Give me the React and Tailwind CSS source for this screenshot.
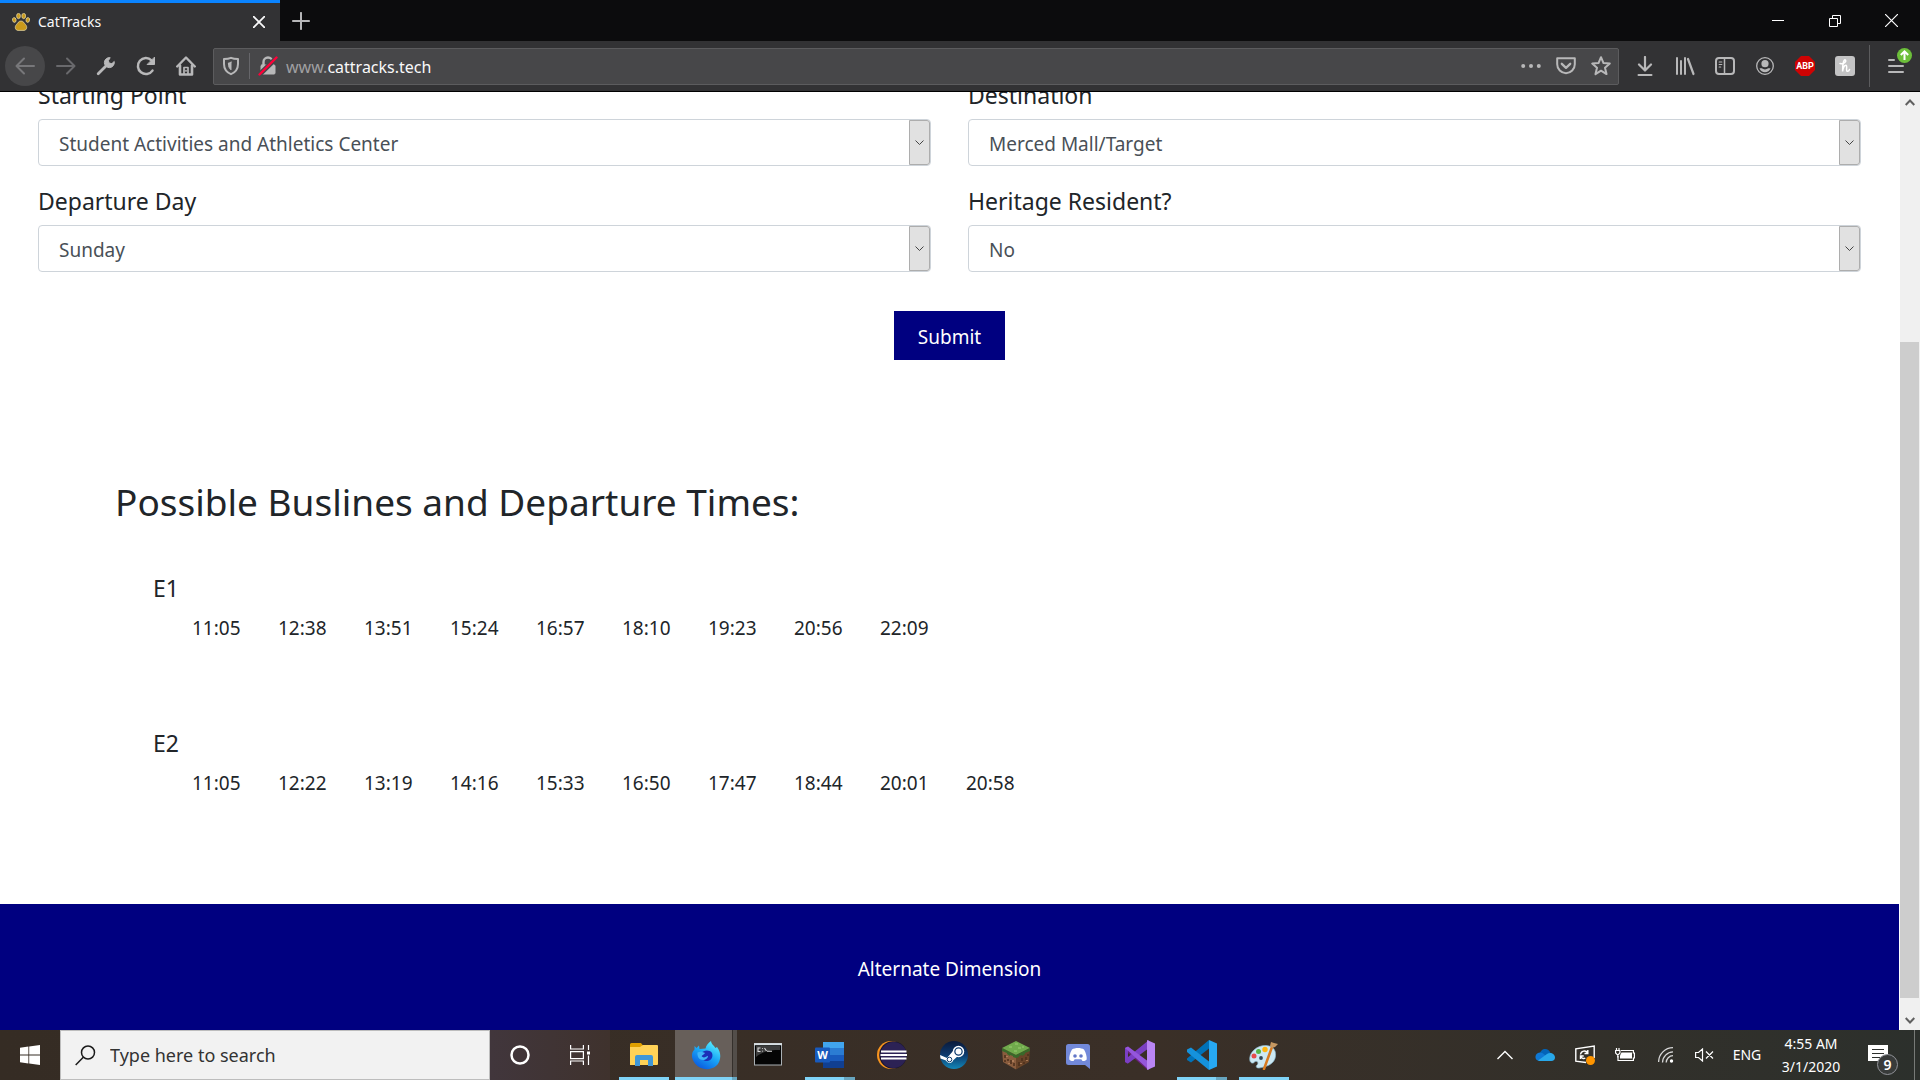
import React from "react";

function Svg({ size = 20, label, children, className = "" }) {
  return (
    <svg
      width={size}
      height={size}
      viewBox="0 0 20 20"
      fill="none"
      stroke="currentColor"
      strokeWidth="2"
      strokeLinecap="round"
      strokeLinejoin="round"
      className={`shrink-0 ${className}`}
      aria-label={label}
      aria-hidden={label ? undefined : true}
    >
      {children}
    </svg>
  );
}

function TabBar() {
  return (
    <div className="flex h-[41px] bg-[#0c0c0d] text-[#f9f9fa]">
      <div className="flex w-[280px] items-center border-t-3 border-[#0a84ff] bg-[#323234] pr-[11px] pl-3">
        <svg width="18" height="18" viewBox="0 0 18 18" fill="#c99a1b" stroke="#e9dcae" strokeWidth="0.7" className="shrink-0" aria-hidden="true">
          <ellipse cx="6.5" cy="3" rx="1.9" ry="2.7" />
          <ellipse cx="11.7" cy="3" rx="1.9" ry="2.7" />
          <ellipse cx="2.3" cy="7" rx="1.8" ry="2.4" transform="rotate(-12 2.3 7)" />
          <ellipse cx="15.8" cy="7" rx="1.8" ry="2.4" transform="rotate(12 15.8 7)" />
          <path d="M9 8c2.5 0 3.200 2.200 4.600 3.700 2 2 1.200 5.600-1.600 5.700H6c-2.800-.1-3.600-3.700-1.600-5.700C5.800 10.200 6.500 8 9 8z" />
        </svg>
        <span className="ml-2 flex-1 text-sm">CatTracks</span>
        <button type="button" aria-label="Close tab" className="flex h-5 w-5 items-center justify-center">
          <Svg size={12}>
            <path d="M1 1l18 18M19 1L1 19" strokeWidth="3" />
          </Svg>
        </button>
      </div>
      <button type="button" aria-label="New tab" className="flex w-[42px] items-center justify-center text-[#b8b8b9]">
        <Svg size={18}>
          <path d="M10 1v18M1 10h18" strokeWidth="2.200" />
        </Svg>
      </button>
      <div className="ml-auto flex">
        <button type="button" aria-label="Minimize" className="flex w-[57px] items-center justify-center">
          <svg width="12" height="12" viewBox="0 0 12 12" stroke="white" aria-hidden="true"><path d="M0 5.500h12" /></svg>
        </button>
        <button type="button" aria-label="Restore" className="flex w-[57px] items-center justify-center">
          <svg width="12" height="12" viewBox="0 0 12 12" fill="none" stroke="white" aria-hidden="true"><path d="M.5 3.500h8v8h-8zM3.500 3.500v-3h8v8h-3" /></svg>
        </button>
        <button type="button" aria-label="Close" className="flex w-[57px] items-center justify-center">
          <svg width="13" height="13" viewBox="0 0 13 13" stroke="white" strokeWidth="1.200" aria-hidden="true"><path d="M0 0l13 13M13 0L0 13" /></svg>
        </button>
      </div>
    </div>
  );
}

function ToolButton({ label, children, className = "" }) {
  return (
    <button type="button" aria-label={label} className={`flex h-10 w-10 shrink-0 items-center justify-center ${className}`}>
      {children}
    </button>
  );
}

function NavBar() {
  return (
    <div className="flex h-[51px] items-center border-b border-black bg-[#323234] pl-[5px] text-[#b8b8b9]">
      <ToolButton label="Back" className="rounded-full bg-[#474749] text-[#77777a]">
        <Svg><path d="M19 10H2M9 2.500L1.500 10 9 17.500" /></Svg>
      </ToolButton>
      <div className="ml-px flex">
        <ToolButton label="Forward" className="text-[#69696c]">
          <Svg><path d="M1 10h17M11 2.500l7.500 7.500-7.500 7.500" /></Svg>
        </ToolButton>
        <ToolButton label="Developer tools">
          <Svg>
            <path d="M2.200 17.800L10 10" strokeWidth="2.800" />
            <path d="M18.300 5.800A5 5 0 1 1 14.200 1.700L12.400 4.600l.6 2.400 2.500.6z" fill="currentColor" strokeWidth="1" />
          </Svg>
        </ToolButton>
        <ToolButton label="Reload">
          <Svg>
            <path d="M16.500 14.600A8 8 0 1 1 15.500 4.300" strokeWidth="2.500" />
            <path d="M18.500 1.500v7h-7z" fill="currentColor" strokeWidth="1" />
          </Svg>
        </ToolButton>
        <ToolButton label="Home">
          <Svg>
            <path d="M1.200 10.500L10 1.500l8.800 9" strokeWidth="2.400" />
            <path d="M4 9.500V18.500h12V9.500" strokeWidth="2.600" />
            <path d="M8 18v-6.500h4V18M10 14.500v.5" strokeWidth="1.700" />
          </Svg>
        </ToolButton>
      </div>

      <div className="ml-[7px] flex h-[37px] min-w-0 flex-1 items-center rounded-xs border border-[#5c5c5e] bg-[#474749] pr-[7px] pl-[7px]">
        <Svg>
          <path d="M10 1.800c2.300 1 4.500 1.200 7 1.200v5c0 5-2.400 8.200-7 10.200-4.600-2-7-5.200-7-10.200V3c2.500 0 4.700-.2 7-1.200z" />
          <path d="M10 6.200v7.600c-1.800-1.500-2.600-3.200-2.600-6.800 1 0 1.600-.2 2.600-.8z" fill="currentColor" strokeWidth="1" />
        </Svg>
        <span className="mx-2 h-[26px] w-px bg-[#66666a]" />
        <Svg>
          <path d="M5.500 9V6a4.500 4.500 0 0 1 9 0v3" strokeWidth="2.400" />
          <rect x="3" y="9" width="14" height="9" rx="1" fill="currentColor" strokeWidth="1" />
          <path d="M2 18L18.500 2" stroke="#474749" strokeWidth="5" />
          <path d="M1.500 18.500L18.500 1.500" stroke="#ff0039" strokeWidth="2.400" />
        </Svg>
        <div className="ml-2 flex-1 pt-0.5 text-base text-[#a0a0a2]">
          www.<span className="text-[#f9f9fa]">cattracks.tech</span>
        </div>
        <div className="flex items-center gap-[15px]">
          <button type="button" aria-label="Page actions">
            <Svg><g fill="currentColor" stroke="none"><circle cx="2.200" cy="10" r="2" /><circle cx="10" cy="10" r="2" /><circle cx="17.800" cy="10" r="2" /></g></Svg>
          </button>
          <button type="button" aria-label="Save to Pocket">
            <Svg>
              <path d="M1.200 2.200h17.600v6a8.800 9 0 0 1-17.600 0z" />
              <path d="M5.800 7.800l4.200 4 4.200-4" strokeWidth="2.300" />
            </Svg>
          </button>
          <button type="button" aria-label="Bookmark this page">
            <Svg><path d="M10 1.200l2.500 5.900 6.300.5-4.800 4.200 1.500 6.300-5.500-3.400-5.500 3.400L6 11.800 1.200 7.600l6.300-.5z" /></Svg>
          </button>
        </div>
      </div>

      <div className="ml-1.5 flex items-center">
        <ToolButton label="Downloads">
          <Svg><path d="M10 1v13M4 8.500l6 6 6-6" strokeWidth="2.200" /><path d="M3.500 19h13" /></Svg>
        </ToolButton>
        <ToolButton label="Library">
          <Svg><path d="M2 2v16M6 5v13M10 2v16" /><path d="M13 3l5.500 15" strokeWidth="2.200" /></Svg>
        </ToolButton>
        <ToolButton label="Sidebars">
          <Svg><rect x="1" y="2" width="18" height="16" rx="3" /><path d="M9.500 3v14" strokeWidth="1.500" /><path d="M4.200 6h2.600M4.200 8.500h2.600M4.200 11h1.500" strokeWidth="1.200" /></Svg>
        </ToolButton>
        <ToolButton label="Account">
          <Svg>
            <circle cx="10" cy="10" r="8.300" strokeWidth="1.300" />
            <circle cx="10" cy="7.700" r="3.600" fill="currentColor" stroke="none" />
            <path d="M4.500 12.300h2.300c1.800 1.500 4.600 1.500 6.400 0h2.300c-.8 2.400-3 4-5.500 4s-4.700-1.600-5.500-4z" fill="currentColor" stroke="none" />
          </Svg>
        </ToolButton>
        <ToolButton label="Adblock Plus">
          <svg width="20" height="20" viewBox="0 0 20 20" aria-hidden="true">
            <path d="M6 0h8l6 6v8l-6 6H6l-6-6V6z" fill="#cf0303" />
            <text x="10" y="13.200" textAnchor="middle" fontSize="9" fontWeight="700" fill="white" fontFamily="Roboto, sans-serif">ABP</text>
          </svg>
        </ToolButton>
        <ToolButton label="Honey">
          <svg width="20" height="20" viewBox="0 0 20 20" fill="none" aria-hidden="true">
            <rect width="20" height="20" rx="3" fill="#c3c3c4" />
            <path d="M5 7.500c3.500.7 6.500-1.500 5.500-3.300C9 2.500 7.500 7 7.600 15.500 8 11.500 9.500 9 11 9.200c1.800.5-.5 5.800 1.200 6.100 1.200.2 2-.9 2.300-1.800" stroke="white" strokeWidth="1.500" strokeLinecap="round" />
          </svg>
        </ToolButton>
        <span className="mx-1 h-[42px] w-px bg-[#5c5c5e]" />
        <button type="button" aria-label="Open menu" className="relative flex h-10 w-[46px] items-center justify-center pr-0.5">
          <svg width="16" height="16" viewBox="0 0 16 16" stroke="currentColor" strokeWidth="2" strokeLinecap="round" aria-hidden="true">
            <path d="M1 2h5M1 8h14M1 14h14" />
          </svg>
          <svg width="15" height="15" viewBox="0 0 15 15" className="absolute top-0.5 right-2" aria-hidden="true">
            <circle cx="7.500" cy="7.500" r="7.500" fill="#6cbf3a" />
            <path d="M7.500 12V3.500M3.800 7l3.700-3.600L11.200 7" stroke="white" strokeWidth="2" fill="none" />
          </svg>
        </button>
      </div>
    </div>
  );
}

function Field({ id, label, options }) {
  return (
    <div className="flex flex-col">
      <label htmlFor={id} className="h-10 text-[23px] leading-8">{label}</label>
      <div className="relative">
        <select id={id} className="block h-[47px] w-full appearance-none rounded-[4px] border border-[#ced4da] bg-white px-5 pt-1 text-[19px] text-[#495057]">
          {options.map((o) => <option key={o}>{o}</option>)}
        </select>
        <span className="pointer-events-none absolute inset-y-px right-px flex w-[21px] items-center justify-center rounded-r-[3px] border border-[#adadad] bg-[#e1e1e1]">
          <svg width="9" height="6" viewBox="0 0 9 6" fill="none" stroke="#444" aria-hidden="true"><path d="M.5.5l4 4 4-4" /></svg>
        </span>
      </div>
    </div>
  );
}

const fields = [
  { id: "start", label: "Starting Point", options: ["Student Activities and Athletics Center"] },
  { id: "destination", label: "Destination", options: ["Merced Mall/Target"] },
  { id: "day", label: "Departure Day", options: ["Sunday"] },
  { id: "heritage", label: "Heritage Resident?", options: ["No", "Yes"] },
];

const buslines = [
  { name: "E1", times: ["11:05", "12:38", "13:51", "15:24", "16:57", "18:10", "19:23", "20:56", "22:09"] },
  { name: "E2", times: ["11:05", "12:22", "13:19", "14:16", "15:33", "16:50", "17:47", "18:44", "20:01", "20:58"] },
];

function Page() {
  return (
    <div className="flex min-w-0 flex-1 flex-col overflow-hidden bg-white text-[#212529]">
      <form className="-mt-[13px] flex flex-col px-[38px]" onSubmit={(e) => e.preventDefault()}>
        <div className="grid grid-cols-2 gap-x-[37px] gap-y-[19px]">
          {fields.map((f) => <Field key={f.id} {...f} />)}
        </div>
        <button type="submit" className="mt-[39px] h-[49px] self-center bg-[#000080] px-6 pt-1 text-[19px] text-white">Submit</button>
      </form>

      <main className="flex flex-col px-[115px] pt-[112px]">
        <h1 className="text-[37px] leading-[60px]">Possible Buslines and Departure Times:</h1>
        <div className="mt-9 flex flex-col gap-[75px] pl-[38px]">
          {buslines.map((line) => (
            <section key={line.name}>
              <h2 className="text-[23px] leading-10">{line.name}</h2>
              <ul className="flex pl-[39px] text-[19px] leading-10">
                {line.times.map((t) => <li key={t} className="w-[86px]">{t}</li>)}
              </ul>
            </section>
          ))}
        </div>
      </main>

      <footer className="mt-auto flex h-[126px] items-center justify-center bg-[#000080] pt-1 text-[19px] text-white">
        Alternate Dimension
      </footer>
    </div>
  );
}

function ScrollBar() {
  return (
    <div className="flex w-[21px] flex-col border-l border-white bg-[#f0f0f0] text-[#606060]">
      <div className="flex h-5 items-center justify-center">
        <svg width="10" height="7" viewBox="0 0 10 7" fill="none" stroke="currentColor" strokeWidth="2" aria-hidden="true"><path d="M.7 6L5 1.500 9.300 6" /></svg>
      </div>
      <div className="flex flex-1 flex-col">
        <div className="flex-230" />
        <div className="mr-px flex-656 bg-[#cdcdcd]" />
        <div className="flex-12" />
      </div>
      <div className="flex h-5 items-center justify-center">
        <svg width="10" height="7" viewBox="0 0 10 7" fill="none" stroke="currentColor" strokeWidth="2" aria-hidden="true"><path d="M.7 1L5 5.500 9.300 1" /></svg>
      </div>
    </div>
  );
}

function AppIcon({ children }) {
  return <svg width="30" height="30" viewBox="0 0 30 30" fill="none" aria-hidden="true">{children}</svg>;
}

const explorerIcon = (
  <AppIcon>
    <path d="M1 4.500A1.500 1.500 0 0 1 2.500 3H12l2 2.500V9H1z" fill="#e0a000" />
    <path d="M1 7h10l3-2h14a1 1 0 0 1 1 1v18a1 1 0 0 1-1 1H1z" fill="#ffd257" />
    <path d="M6 26V17a2 2 0 0 1 2-2h14a2 2 0 0 1 2 2v9h-5v-6h-8v6z" fill="#3f97d8" />
  </AppIcon>
);

const firefoxIcon = (
  <AppIcon>
    <defs>
      <linearGradient id="foxTail" x1="24" y1="1" x2="8" y2="28" gradientUnits="userSpaceOnUse">
        <stop stopColor="#5ff6ff" /><stop offset=".5" stopColor="#1aa7f6" /><stop offset="1" stopColor="#0a5be0" />
      </linearGradient>
    </defs>
    <path d="M20 1c.5 3.500 3 4.500 4.500 7l1.500-1c5 6 4 15-1 19-6 5-16 4-21-2.500C-.5 18 .5 12 3.500 9.500V6l2 2L8 5.500l.5 3.500 6-.5C15 5 17.500 3 20 1z" fill="url(#foxTail)" />
    <path d="M10.500 13c2-3 8-3.500 10.500 0 1.500 4-1 8-5 8-3.500 0-5.500-2-5.500-4.500z" fill="#1c2fb8" />
    <path d="M6.500 12.500c3-1.500 5.500-.5 7.500.5-.8 1.800-2.800 1.800-3.500 3.300 2 2.200 4.500.7 6.500-.5 0 4-6 6-9.300 2.300-1-1.800-1.500-3.600-1.200-5.600z" fill="#3fb4f8" />
  </AppIcon>
);

const terminalIcon = (
  <AppIcon>
    <rect x="1.500" y="3.500" width="27" height="21.500" fill="#050505" stroke="#aab0b4" />
    <path d="M1 4.200h28" stroke="#d8dfe3" strokeWidth="2" />
    <path d="M3 17C10 11 18 10 27 10V6H3z" fill="#3c3c3c" />
    <path d="M7.500 8H5v3.500h2.500M9.500 8.300v.7M9.500 10.800v.7M11.500 8l2 3M14 11.300h5" stroke="#ddd" strokeWidth="1.100" />
  </AppIcon>
);

const wordIcon = (
  <AppIcon>
    <path d="M8 2h21v7H8z" fill="#41a5ee" />
    <path d="M8 8h21v7H8z" fill="#2b7cd3" />
    <path d="M8 15h21v7H8z" fill="#185abd" />
    <path d="M8 21h21v7H8z" fill="#103f91" />
    <rect x="0" y="7.500" width="15" height="15" rx="1" fill="#185abd" />
    <text x="7.500" y="19" textAnchor="middle" fontSize="11" fontWeight="700" fill="white" fontFamily="Open Sans, sans-serif">W</text>
  </AppIcon>
);

const eclipseIcon = (
  <AppIcon>
    <circle cx="14" cy="15" r="14" fill="#f7941e" />
    <circle cx="16" cy="15" r="13.800" fill="#1b1630" />
    <circle cx="16.500" cy="15" r="13" fill="#2c2255" />
    <path d="M4 11.500h25.500M3.500 15H30M4 18.500h25.500" stroke="white" strokeWidth="2" />
  </AppIcon>
);

const steamIcon = (
  <AppIcon>
    <defs>
      <linearGradient id="steamDisc" x1="15" y1="1" x2="15" y2="29" gradientUnits="userSpaceOnUse">
        <stop stopColor="#0b1a3a" /><stop offset=".5" stopColor="#0c3a6e" /><stop offset="1" stopColor="#1387b8" />
      </linearGradient>
    </defs>
    <circle cx="15" cy="15" r="14" fill="url(#steamDisc)" />
    <path d="M1 15l7 3 6-7 6 4-6 5.500c-.5 3-5.500 3.500-7 0L1.500 18.500z" fill="white" />
    <circle cx="19.500" cy="11.500" r="5" fill="#0c3a6e" stroke="white" strokeWidth="1.500" />
    <circle cx="19.500" cy="11.500" r="3" fill="white" />
    <circle cx="10.500" cy="19.500" r="2.300" stroke="#0c3a6e" />
  </AppIcon>
);

const grassBlockIcon = (
  <AppIcon>
    <path d="M1 8l14 6v15.500L2 22z" fill="#8a5d3e" />
    <path d="M29 8l-14 6v15.500L28 22z" fill="#694429" />
    <path d="M15 1l14 7-14 7L1 8z" fill="#70aa4c" />
    <path d="M1 8l14 7v3l-3-1v-1l-3-1v1l-3-2v-1l-5-2zM29 8l-14 7v3l3-1v-1l3-1v1l3-2v-1l5-2z" fill="#39682a" />
    <path d="M4 15v3M7 19v2M10 20v4M13 23v3M4 20v2M18 22v4M21 18v3M25 17v3M23 22v2M27 14v2" stroke="#4c2f1c" strokeWidth="1.500" />
    <path d="M6 16v1M12 20v2M8 23v1M20 23v1M26 20v1" stroke="#b98762" strokeWidth="1.500" />
    <path d="M8 7h3M14 4h3M17 8h3M13 11h3M21 7h2" stroke="#9bcc72" />
  </AppIcon>
);

const discordIcon = (
  <AppIcon>
    <path d="M5.500 4h19A2.500 2.500 0 0 1 27 6.500V29l-5-4H5.500A2.500 2.500 0 0 1 3 22.500v-16A2.500 2.500 0 0 1 5.500 4z" fill="#7289da" />
    <path d="M9 9.500c3-2 9-2 12 0 2 3.500 3 7 2.700 10-1.500 1.500-3 1.800-4.200 1.500l-1.200-1.800h-6.600L10.500 21c-1.500.3-3-.3-4.200-1.500-.3-3 .7-6.500 2.700-10z" fill="white" />
    <circle cx="12" cy="16" r="1.800" fill="#6478c8" />
    <circle cx="18" cy="16" r="1.800" fill="#6478c8" />
  </AppIcon>
);

const visualStudioIcon = (
  <AppIcon>
    <path d="M0 8l3-1.500L22 25v4.500L3 13v11L0 22z" fill="#68217a" />
    <path d="M0 22l3 1.500L24 8V0L3 17V7L0 8z" fill="#7b3fc4" />
    <path d="M3 6.500L24 22v8L0 8z" fill="#9556dc" />
    <path d="M22 0l8 3.500v23L22 30z" fill="#ba85f5" />
  </AppIcon>
);

const codeIcon = (
  <AppIcon>
    <path d="M22 0v8.500L4 22.500 0 20v-1.500z" fill="#0072b8" />
    <path d="M22 30v-8.500L4 7.500 0 9.500V12z" fill="#1592dc" />
    <path d="M22 0l8 3.500v23L22 30z" fill="#27a8f2" />
  </AppIcon>
);

const paintIcon = (
  <AppIcon>
    <path d="M1 21C-1 13 8 5 17 5.500c8 .5 11 6 9 13-2 6-9 8.500-16 9.500-3 0-3.500-2-1.500-3.500C10 22 7 20 5 22.500c-1.500 1.500-3.500 0-4-1.500z" fill="#cce8f3" stroke="#8cb9ce" strokeWidth=".7" />
    <circle cx="5" cy="16" r="2.500" fill="#e54b4b" />
    <circle cx="9.500" cy="11.500" r="2.500" fill="#55b544" />
    <circle cx="16" cy="9.500" r="2.700" fill="#ffb511" />
    <circle cx="12" cy="18" r="1.900" fill="#344756" />
    <path d="M23 7l-8 22" stroke="#d77a20" strokeWidth="2.500" strokeLinecap="round" />
    <path d="M21 6l1-4 3 1 4 1-3 3-3 1z" fill="#c69862" />
  </AppIcon>
);

const apps = [
  { name: "File Explorer", icon: explorerIcon, state: "open" },
  { name: "Firefox", icon: firefoxIcon, state: "active" },
  { name: "Command Prompt", icon: terminalIcon, state: "idle" },
  { name: "Word", icon: wordIcon, state: "stacked" },
  { name: "Eclipse", icon: eclipseIcon, state: "idle" },
  { name: "Steam", icon: steamIcon, state: "idle" },
  { name: "Minecraft", icon: grassBlockIcon, state: "idle" },
  { name: "Discord", icon: discordIcon, state: "idle" },
  { name: "Visual Studio", icon: visualStudioIcon, state: "idle" },
  { name: "Visual Studio Code", icon: codeIcon, state: "stacked" },
  { name: "Paint", icon: paintIcon, state: "open" },
];

function TaskButton({ name, icon, state }) {
  const active = state === "active";
  return (
    <button type="button" aria-label={name} className="relative flex w-[62px] items-stretch">
      <span className={`flex flex-1 items-center justify-center ${active ? "bg-[#675f5a] pl-1" : ""}`}>{icon}</span>
      {active && <span className="w-[5px] border-l border-[#35302c] bg-[#534e4a]" />}
      {active && <span className="absolute inset-x-0 bottom-0 h-[3px] border-r-5 border-[#67a5bf] bg-[#7fd3f7]" />}
      {state === "open" && <span className="absolute inset-x-1.5 bottom-0 h-[3px] bg-[#7fd3f7]" />}
      {state === "stacked" && <span className="absolute inset-x-1.5 bottom-0 h-[3px] border-r-11 border-[#67a5bf] bg-[#7fd3f7]" />}
    </button>
  );
}

function TrayButton({ label, children, className = "w-[41px]" }) {
  return (
    <button type="button" aria-label={label} className={`flex items-center justify-center ${className}`}>
      {children}
    </button>
  );
}

function TaskBar() {
  return (
    <div className="flex h-[50px] bg-linear-to-r from-[#352c24] from-0% via-[#3a2f27] via-60% to-[#2c302c] text-white">
      <button type="button" aria-label="Start" className="flex w-[60px] items-center justify-center">
        <svg width="20" height="20" viewBox="0 0 20 20" fill="white" aria-hidden="true">
          <path d="M0 2.800L8.400 1.600v8H0zM9.200 1.500L20 0v9.600H9.200zM0 10.400h8.400v8L0 17.200zM9.200 10.400H20V20L9.200 18.500z" />
        </svg>
      </button>
      <label className="flex w-[430px] items-center border border-[#bdbdbd] bg-[#f2f2f2] pl-[14px]">
        <svg width="21" height="21" viewBox="0 0 21 21" fill="none" stroke="#1a1a1a" strokeWidth="1.500" aria-hidden="true">
          <circle cx="13" cy="7.500" r="6.500" />
          <path d="M8.300 12.200L.7 20" />
        </svg>
        <input aria-label="Type here to search" placeholder="Type here to search" className="ml-3.5 min-w-0 flex-1 bg-transparent text-[18px] outline-none placeholder:text-[#333]" />
      </label>
      <div className="flex bg-linear-to-r from-[#41363c] to-[#3f322d]">
        <TrayButton label="Cortana" className="w-[60px]">
          <svg width="20" height="20" viewBox="0 0 20 20" fill="none" stroke="white" strokeWidth="2.500" aria-hidden="true"><circle cx="10" cy="10" r="8.500" /></svg>
        </TrayButton>
        <TrayButton label="Task View" className="w-[60px]">
          <svg width="20" height="20" viewBox="0 0 20 20" fill="none" stroke="white" strokeWidth="1.200" aria-hidden="true">
            <path d="M.6 0v4h12.800V0M.6 20v-4h12.800v4M.6 6.600h12.800v7H.6zM18.500 0v5M18.500 10.500V20" />
            <path d="M17 6.500h3v3h-3z" fill="white" stroke="none" />
          </svg>
        </TrayButton>
      </div>
      <div className="flex pl-[3px]">
        {apps.map((app) => <TaskButton key={app.name} {...app} />)}
      </div>

      <div className="ml-auto flex">
        <TrayButton label="Show hidden icons">
          <svg width="16" height="10" viewBox="0 0 16 10" fill="none" stroke="white" strokeWidth="1.400" aria-hidden="true"><path d="M.5 9L8 1.500 15.500 9" /></svg>
        </TrayButton>
        <TrayButton label="OneDrive" className="w-10">
          <svg width="20" height="14" viewBox="0 0 20 14" aria-hidden="true">
            <path d="M5 7C4 1 13-2 15.500 5L10 9z" fill="#0364b8" />
            <path d="M4.500 13C-1 13-1 5 5 4.600c3 0 5 3 8 5z" fill="#0f78d4" />
            <path d="M3 12.500L12 6c3-2.500 8-.5 8 3.500 0 2-1.500 3.500-3.500 3.500H4.500z" fill="#28a8ea" />
          </svg>
        </TrayButton>
        <TrayButton label="Windows Update" className="w-10">
          <svg width="20" height="20" viewBox="0 0 20 20" fill="none" stroke="white" strokeWidth="1.400" aria-hidden="true">
            <path d="M11 17.500L.8 16.200V3.800L19.200 1v12" />
            <path d="M5.500 9.500c.5-4 5.500-4.500 7-1.500M12.800 5v3.500H9.500M5.500 14v-3h3.200M5.800 11.500c1 2 3 2.500 4.500 1.500" />
            <circle cx="15.500" cy="15.500" r="4.500" fill="#ff9500" stroke="none" />
          </svg>
        </TrayButton>
        <TrayButton label="Battery" className="w-10">
          <svg width="20" height="14" viewBox="0 0 20 14" fill="none" stroke="white" strokeWidth="1.200" aria-hidden="true">
            <path d="M6 2.500h12.400V5h1v5h-1v2.500H3V8" />
            <path d="M6.500 4.500H17v6H5V7.500z" fill="white" stroke="none" />
            <path d="M1.500 0v2.500M4 0v2.500M.6 2.500h4.300V5L3.500 6.500H2L.6 5zM2.800 6.500v3" />
          </svg>
        </TrayButton>
        <TrayButton label="Wi-Fi">
          <svg width="16" height="16" viewBox="0 0 16 16" fill="none" stroke="#d8d8d8" strokeWidth="1.300" aria-hidden="true">
            <path d="M.6 15A14.500 14.500 0 0 1 15 .7M4.500 15.500A11 11 0 0 1 15 4.800M8.200 15.500A7 7 0 0 1 15 8.600" />
            <circle cx="13.500" cy="14" r="1.700" fill="white" stroke="none" />
          </svg>
        </TrayButton>
        <TrayButton label="Volume muted" className="w-[36px]">
          <svg width="19" height="14" viewBox="0 0 19 14" fill="none" stroke="white" strokeWidth="1.200" aria-hidden="true">
            <path d="M.6 4.500h2.900L7.500 1v12L3.500 9.500H.6zM11 3.500l7 7M18 3.500l-7 7" />
          </svg>
        </TrayButton>
        <button type="button" className="w-[50px] text-sm">ENG</button>
        <button type="button" aria-label="Date and time" className="flex w-[78px] flex-col items-center justify-center text-sm leading-[23px]">
          <span>4:55 AM</span>
          <span>3/1/2020</span>
        </button>
        <button type="button" aria-label="Notifications, 9 new" className="relative flex w-[63px] items-center pl-[18px]">
          <svg width="20" height="20" viewBox="0 0 20 20" aria-hidden="true">
            <path d="M0 0h20v16h-6v4l-4-4H0z" fill="white" />
            <path d="M4 4.500h12M4 8.500h12M4 12.500h8" stroke="#2d302d" />
          </svg>
          <span className="absolute right-[15px] bottom-[5px] flex h-[21px] w-[21px] items-center justify-center rounded-full border border-[#92949a] bg-[#383b3a] text-sm font-semibold">9</span>
        </button>
        <span className="mr-[5px] ml-px w-px bg-[#777a77]" />
      </div>
    </div>
  );
}

export default function App() {
  return (
    <div className="flex min-h-screen flex-col font-['Noto_Sans','Open_Sans',sans-serif]">
      <TabBar />
      <NavBar />
      <div className="flex flex-1">
        <Page />
        <ScrollBar />
      </div>
      <TaskBar />
    </div>
  );
}
